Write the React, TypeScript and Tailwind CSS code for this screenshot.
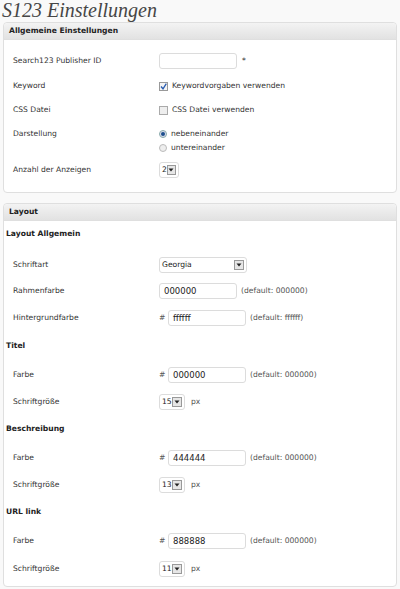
import type { ReactNode } from 'react';

const font = { fontFamily: '"DejaVu Sans", Verdana, sans-serif' };

function Field({ label, top, children }: { label: string; top: string; children?: ReactNode }) {
    return (
        <div className={`flex items-center h-[18px] ${top}`}>
            <div className="w-[155px] pl-[9px] text-[#333]">{label}</div>
            <div className="flex items-center">{children}</div>
        </div>
    );
}

function Heading({ text, top }: { text: string; top: string }) {
    return (
        <div className={`flex items-center h-[18px] pl-[2px] font-bold text-[#222] ${top}`}>{text}</div>
    );
}

function TextInput({ value, w = 'w-[78px]' }: { value: string; w?: string }) {
    return (
        <div className={`${w} h-[16px] bg-white border border-[#dcdcdc] rounded-[3px] flex items-center px-[4px] text-[#222] text-[8.5px]`}>
            {value}
        </div>
    );
}

function Select({ value, w }: { value: string; w: string }) {
    return (
        <div className={`${w} h-[16px] bg-white border border-[#dcdcdc] rounded-[3px] flex items-center pl-[2px] pr-[2px] text-[#222]`}>
            <span className="flex-1">{value}</span>
            <span className="w-[10px] h-[10px] bg-[#e6e6e6] border border-[#999] flex items-center justify-center">
                <svg width="6" height="4" viewBox="0 0 6 4">
                    <path d="M0.5 0.5 H5.5 L3 3.5 Z" fill="#222" />
                </svg>
            </span>
        </div>
    );
}

function Hex({ value, def }: { value: string; def: string }) {
    return (
        <>
            <span className="w-[9px] text-[#555]">#</span>
            <TextInput value={value} />
            <span className="ml-[4px] text-[#555]">(default: {def})</span>
        </>
    );
}

function Box({ title, className, children }: { title: string; className: string; children: ReactNode }) {
    return (
        <div className={`mx-[3px] bg-white border border-[#dfdfdf] rounded-[4px] ${className}`}>
            <div className="h-[17px] flex items-center pl-[5px] font-bold text-[#222] bg-gradient-to-b from-[#f3f3f3] to-[#e2e2e2] border-b border-[#dfdfdf] rounded-t-[4px]">
                {title}
            </div>
            {children}
        </div>
    );
}

export default function App() {
    return (
        <div className="w-[400px] h-[589px] bg-[#f9f9f9] overflow-hidden text-[7.6px] leading-none" style={font}>
            <div
                className="h-[22px] pl-[2px] text-[20px] italic text-[#464646] leading-[20px]"
                style={{ fontFamily: '"Liberation Serif", Georgia, serif' }}
            >
                S123 Einstellungen
            </div>

            <Box title="Allgemeine Einstellungen" className="h-[171px]">
                <Field label="Search123 Publisher ID" top="mt-[12px]">
                    <TextInput value="" />
                    <span className="ml-[5px] text-[#333]">*</span>
                </Field>
                <Field label="Keyword" top="mt-[7px]">
                    <span className="w-[9px] h-[9px] border border-[#999] bg-[#f4f4f4] flex items-center justify-center">
                        <svg width="7" height="7" viewBox="0 0 7 7">
                            <path d="M1 3.5 L3 5.8 L6.3 0.6" fill="none" stroke="#2a5db0" strokeWidth="1.3" />
                        </svg>
                    </span>
                    <span className="ml-[4px] text-[#333]">Keywordvorgaben verwenden</span>
                </Field>
                <Field label="CSS Datei" top="mt-[6px]">
                    <span className="w-[9px] h-[9px] border border-[#aaa] bg-[#eee]" />
                    <span className="ml-[4px] text-[#333]">CSS Datei verwenden</span>
                </Field>
                <div className="flex mt-[8px]">
                    <div className="w-[155px] pl-[9px] h-[14px] flex items-center text-[#333]">Darstellung</div>
                    <div className="flex flex-col">
                        <div className="flex items-center h-[14px]">
                            <span className="w-[8px] h-[8px] rounded-full border border-[#8aa] bg-[#dde] flex items-center justify-center">
                                <span className="w-[4px] h-[4px] rounded-full bg-[#1d4f8c]" />
                            </span>
                            <span className="ml-[4px] text-[#333]">nebeneinander</span>
                        </div>
                        <div className="flex items-center h-[14px]">
                            <span className="w-[8px] h-[8px] rounded-full border border-[#bbb] bg-[#eee]" />
                            <span className="ml-[4px] text-[#333]">untereinander</span>
                        </div>
                    </div>
                </div>
                <Field label="Anzahl der Anzeigen" top="mt-[6px]">
                    <Select value="2" w="w-[20px]" />
                </Field>
            </Box>

            <Box title="Layout" className="mt-[10px] h-[384px]">
                <Heading text="Layout Allgemein" top="mt-[4px]" />
                <Field label="Schriftart" top="mt-[13px]">
                    <Select value="Georgia" w="w-[88px]" />
                </Field>
                <Field label="Rahmenfarbe" top="mt-[8px]">
                    <TextInput value="000000" />
                    <span className="ml-[4px] text-[#555]">(default: 000000)</span>
                </Field>
                <Field label="Hintergrundfarbe" top="mt-[9px]">
                    <Hex value="ffffff" def="ffffff" />
                </Field>

                <Heading text="Titel" top="mt-[10px]" />
                <Field label="Farbe" top="mt-[11px]">
                    <Hex value="000000" def="000000" />
                </Field>
                <Field label="Schriftgröße" top="mt-[9px]">
                    <Select value="15" w="w-[26px]" />
                    <span className="ml-[6px] text-[#555]">px</span>
                </Field>

                <Heading text="Beschreibung" top="mt-[9px]" />
                <Field label="Farbe" top="mt-[11px]">
                    <Hex value="444444" def="000000" />
                </Field>
                <Field label="Schriftgröße" top="mt-[9px]">
                    <Select value="13" w="w-[26px]" />
                    <span className="ml-[6px] text-[#555]">px</span>
                </Field>

                <Heading text="URL link" top="mt-[9px]" />
                <Field label="Farbe" top="mt-[11px]">
                    <Hex value="888888" def="000000" />
                </Field>
                <Field label="Schriftgröße" top="mt-[10px]">
                    <Select value="11" w="w-[26px]" />
                    <span className="ml-[6px] text-[#555]">px</span>
                </Field>
            </Box>
        </div>
    );
}
